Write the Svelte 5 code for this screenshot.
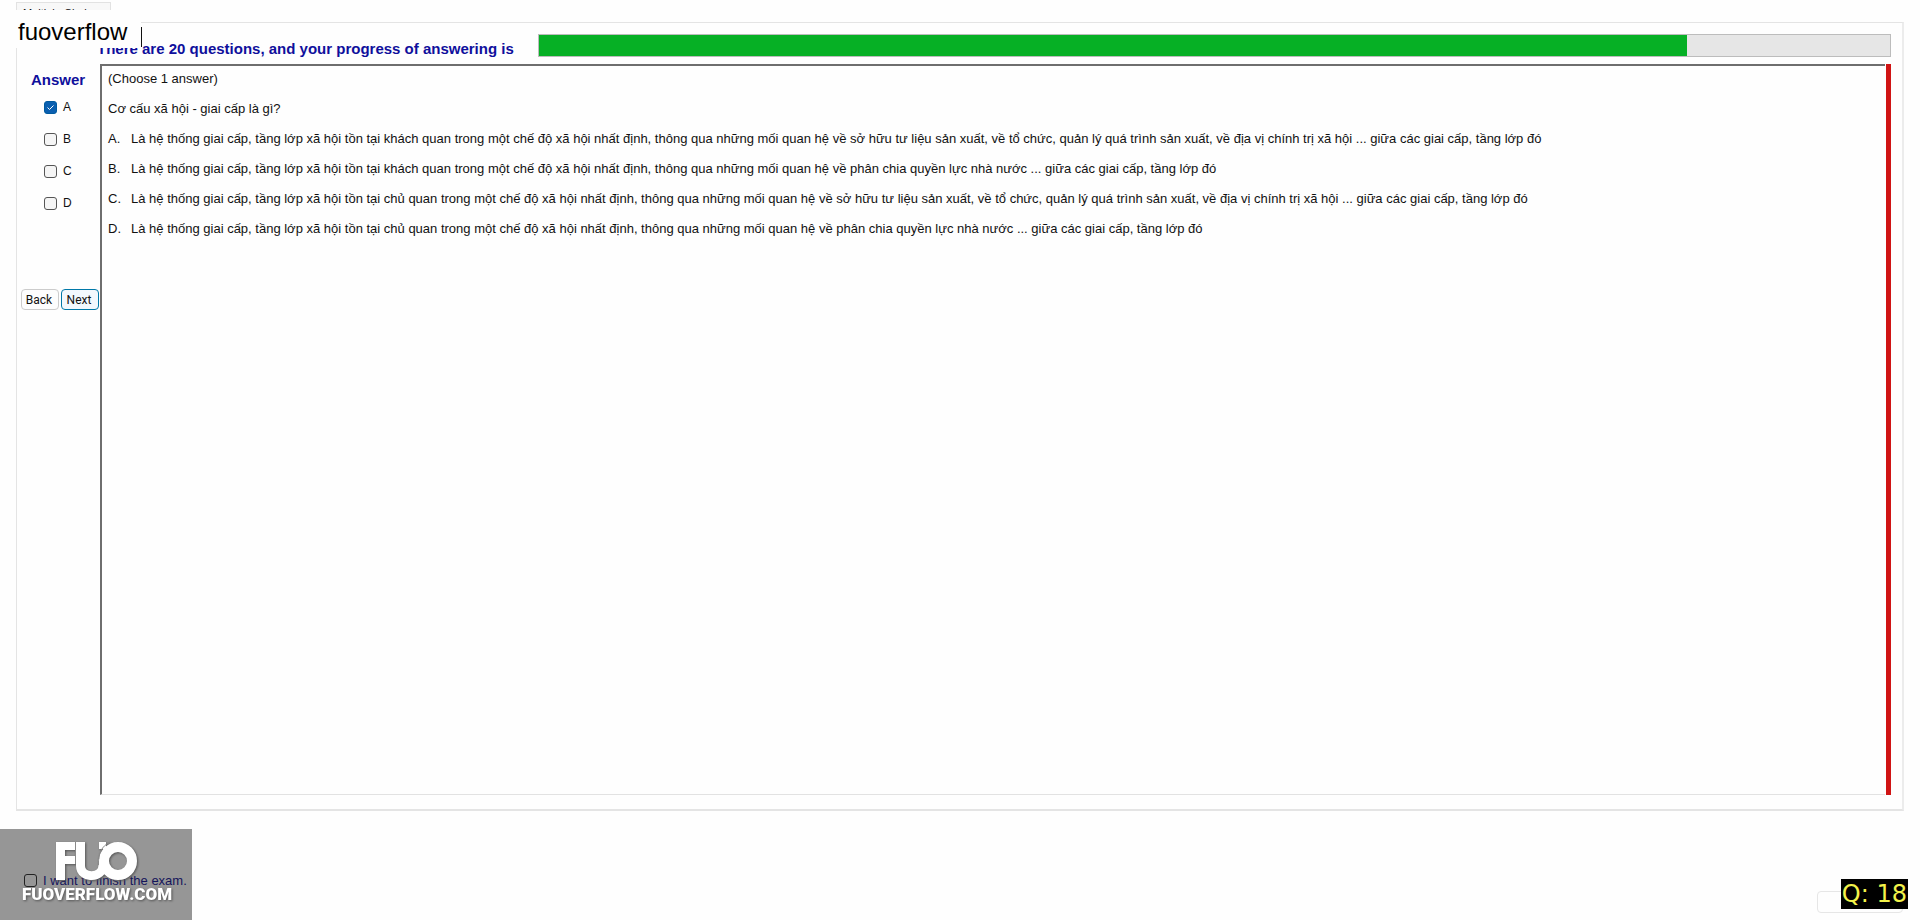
<script>
  const body =
    'Là hệ thống giai cấp, tầng lớp xã hội tồn tại ';
  const options = [
    { key: 'A', text: body + 'khách quan trong một chế độ xã hội nhất định, thông qua những mối quan hệ về sở hữu tư liệu sản xuất, về tổ chức, quản lý quá trình sản xuất, về địa vị chính trị xã hội ... giữa các giai cấp, tầng lớp đó' },
    { key: 'B', text: body + 'khách quan trong một chế độ xã hội nhất định, thông qua những mối quan hệ về phân chia quyền lực nhà nước ... giữa các giai cấp, tầng lớp đó' },
    { key: 'C', text: body + 'chủ quan trong một chế độ xã hội nhất định, thông qua những mối quan hệ về sở hữu tư liệu sản xuất, về tổ chức, quản lý quá trình sản xuất, về địa vị chính trị xã hội ... giữa các giai cấp, tầng lớp đó' },
    { key: 'D', text: body + 'chủ quan trong một chế độ xã hội nhất định, thông qua những mối quan hệ về phân chia quyền lực nhà nước ... giữa các giai cấp, tầng lớp đó' }
  ];
  const progress = 85;
  let chosen = $state({ A: true, B: false, C: false, D: false });
  let finish = $state(false);
</script>

<div class="page">
  <div class="tabs"><button class="tab" type="button">Multiple Choices</button></div>

  <main class="panel">
    <header class="top">
      <h1>There are 20 questions, and your progress of answering is</h1>
      <div class="bar" role="progressbar" aria-label="Progress" aria-valuenow={progress} aria-valuemin="0" aria-valuemax="100">
        <div class="fill" style="width: {progress}%"></div>
      </div>
    </header>

    <div class="work">
      <aside class="side">
        <h2>Answer</h2>
        <div class="choices">
          {#each options as o}
            <label class="choice"><input type="checkbox" bind:checked={chosen[o.key]} />{o.key}</label>
          {/each}
        </div>
        <div class="nav">
          <button type="button">Back</button>
          <button type="button" class="primary">Next</button>
        </div>
      </aside>

      <section class="question">
        <p>(Choose 1 answer)</p>
        <p>Cơ cấu xã hội - giai cấp là gì?</p>
        {#each options as o}
          <p class="option"><span>{o.key}.</span><span>{o.text}</span></p>
        {/each}
      </section>
      <div class="edge"></div>
    </div>
  </main>

  <footer class="foot">
    <div class="brand">
      <label class="choice finish"><input type="checkbox" bind:checked={finish} />I want to finish the exam.</label>
      <div class="mark">
        <svg width="82" height="40" viewBox="0 0 82 40" aria-hidden="true">
          <g fill="none" stroke="#fff">
            <path stroke-width="9" d="M4.500 39V1" />
            <path stroke-width="8" d="M4 5H19M4 19H19" />
            <path stroke-width="9" d="M24.500 1V25C24.500 38 47 38 47 24V18" />
            <path stroke-width="7" d="M46.500 1V8" />
            <circle cx="62" cy="20" r="14" stroke-width="10" />
            <path stroke="#8a8a8a" stroke-width="1" d="M42.500 24C42 12 46 5 54 1M19.500 1V23" />
          </g>
        </svg>
        <span>FUOVERFLOW.COM</span>
      </div>
    </div>
    <div class="end">
      <button class="submit" type="button" aria-label="Finish"></button>
      <div class="counter">Q: 18</div>
    </div>
  </footer>

  <div class="user">fuoverflow</div>
  <div class="caret"></div>
</div>

<style>
  :global(body) { margin: 0; background: #fefefe; }
  .page {
    position: relative;
    display: flex;
    flex-direction: column;
    min-height: 100vh;
    box-sizing: border-box;
    font-family: "Liberation Sans", Arial, sans-serif;
    font-size: 13px;
    color: #111;
  }
  h1, h2, p { margin: 0; }
  button { font: inherit; color: inherit; }
  .tabs { display: flex; height: 20px; padding: 2px 16px 0; }
  .tab { height: 20px; padding: 0 6px; border: 1px solid #e2e2e2; border-bottom: 0; background: #f8f8f8; font-size: 11px; line-height: 16px; }
  .panel {
    display: flex;
    flex: 1;
    flex-direction: column;
    margin: 0 16px;
    padding: 10px 11px 14px 4px;
    border: 1px solid #e4e4e4;
    border-right: 2px solid #ececec;
    border-bottom: 2px solid #e4e4e4;
  }
  .top { display: flex; align-items: center; gap: 24px; padding-left: 76px; }
  h1 { padding-top: 8px; font-size: 15px; line-height: 16px; color: #0f0f9c; white-space: nowrap; }
  .bar { flex: 1; height: 21px; border: 1px solid #bcbcbc; background: #e6e6e6; }
  .fill { height: 100%; background: #06b025; }
  .work { display: flex; flex: 1; margin-top: 7px; }
  .side { width: 79px; flex: none; }
  h2 { padding: 8px 0 0 10px; font-size: 15px; line-height: 16px; color: #0f0f9c; }
  .choices { display: flex; flex-direction: column; gap: 16px; padding: 11px 0 0 23px; }
  .choice { display: flex; align-items: center; gap: 6px; height: 16px; font-size: 12px; }
  .choice input {
    appearance: none;
    width: 13px;
    height: 13px;
    margin: 0;
    border: 1px solid #555;
    border-radius: 3px;
    background: #f5f5f5;
  }
  .choice input:checked {
    border-color: #005a9e;
    background: #0a5fb0 url("data:image/svg+xml,%3Csvg xmlns='http://www.w3.org/2000/svg' viewBox='0 0 11 11'%3E%3Cpath d='M2.500 5.500l2 2 4-4' fill='none' stroke='white'/%3E%3C/svg%3E") center / 11px no-repeat;
  }
  .nav { display: flex; gap: 2px; padding-top: 78px; }
  .nav button { width: 38px; height: 21px; padding: 0 2px 0 0; border: 1px solid #ccc; border-radius: 4px; background: #fdfdfd; font-family: Roboto, sans-serif; font-size: 12px; }
  .nav .primary { border-color: #0078a8; background: #f2f8fd; }
  .question {
    flex: 1;
    min-width: 0;
    padding-left: 6px;
    border: 2px solid #6e6e6e;
    border-right: 0;
    border-bottom: 1px solid #e2e2e2;
  }
  .question p { line-height: 30px; }
  .question p:first-child { line-height: 26px; padding-bottom: 2px; }
  .option { display: grid; grid-template-columns: 23px 1fr; }
  .edge { width: 5px; margin-left: 1px; background: #d01414; }
  .foot { display: flex; align-items: flex-end; justify-content: space-between; height: 91px; padding: 18px 12px 0 0; }
  .brand { width: 192px; height: 91px; position: relative; background: #969696; }
  .finish { padding: 43px 0 0 24px; color: #14145a; font-size: 13px; }
  .finish input { border-color: #222; background: transparent; }
  .mark { position: absolute; inset: 0; display: flex; flex-direction: column; align-items: center; padding: 12px 0 0 2px; filter: drop-shadow(1px 1px 1px #555); }
  .mark span { font: 900 17px/26px Roboto, sans-serif; color: #fff; }
  .end { position: relative; display: flex; align-self: flex-start; padding: 62px 5px 0 0; }
  .submit { width: 86px; height: 22px; border: 1px solid #e6e6e6; border-radius: 4px; background: #fefefe; }
  .counter { position: absolute; right: 0; top: 50px; padding: 0 1px; background: #000; color: #f2f24a; font: 24px/30px "DejaVu Sans", sans-serif; white-space: nowrap; }
  .user { position: absolute; left: 0; top: 10px; padding: 8px 14px 2px 18px; background: #fefefe; color: #000; font-size: 24px; line-height: 28px; }
  .caret { position: absolute; left: 141px; top: 27px; width: 1px; height: 20px; background: #111; }
</style>
